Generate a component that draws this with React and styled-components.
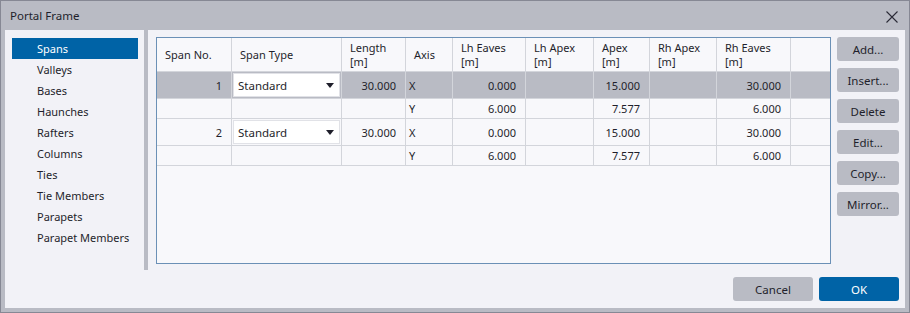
import React from 'react';
import styled, { createGlobalStyle } from 'styled-components';

const GlobalStyle = createGlobalStyle`
  html, body {
    margin: 0;
    padding: 0;
    background: #ffffff;
  }
  body {
    font-family: "Noto Sans", "Liberation Sans", sans-serif;
    font-size: 11px;
    color: #1f1f2b;
  }
`;

const navItems = [
  'Spans',
  'Valleys',
  'Bases',
  'Haunches',
  'Rafters',
  'Columns',
  'Ties',
  'Tie Members',
  'Parapets',
  'Parapet Members',
];

const columns = [
  { title: 'Span No.', width: 75 },
  { title: 'Span Type', width: 110 },
  { title: 'Length', unit: true, width: 64 },
  { title: 'Axis', width: 47 },
  { title: 'Lh Eaves', unit: true, width: 73 },
  { title: 'Lh Apex', unit: true, width: 68 },
  { title: 'Apex', unit: true, width: 56 },
  { title: 'Rh Apex', unit: true, width: 67 },
  { title: 'Rh Eaves', unit: true, width: 74 },
  { title: '', width: 40 },
];

/* span rows come in pairs: X line carries the type dropdown, Y line is plain */
const rows = [
  { no: '1', type: 'Standard', length: '30.000', axis: 'X', lhEaves: '0.000', apex: '15.000', rhEaves: '30.000', selected: true },
  { axis: 'Y', lhEaves: '6.000', apex: '7.577', rhEaves: '6.000' },
  { no: '2', type: 'Standard', length: '30.000', axis: 'X', lhEaves: '0.000', apex: '15.000', rhEaves: '30.000' },
  { axis: 'Y', lhEaves: '6.000', apex: '7.577', rhEaves: '6.000' },
];

const sideButtons = ['Add...', 'Insert...', 'Delete', 'Edit...', 'Copy...', 'Mirror...'];

function App() {
  return (
    <>
      <GlobalStyle />
      <Window>
        <TitleBar>
          <span>Portal Frame</span>
          <CloseBtn aria-label="Close">
            <svg width="12" height="12" viewBox="0 0 12 12">
              <path d="M0.5 0.5 L11.5 11.5 M11.5 0.5 L0.5 11.5" stroke="#2a2a36" strokeWidth="1.1" fill="none" />
            </svg>
          </CloseBtn>
        </TitleBar>
        <Body>
          <Main>
            <NavList>
              {navItems.map((item, i) => (
                <NavItem key={item} $active={i === 0}>{item}</NavItem>
              ))}
            </NavList>
            <Splitter />
            <Content>
              <TableBox>
                <Grid>
                  <colgroup>
                    {columns.map((c, i) => (
                      <col key={i} style={{ width: c.width }} />
                    ))}
                  </colgroup>
                  <thead>
                    <tr>
                      {columns.map((c, i) => (
                        <HeadCell key={i}>
                          {c.unit ? (
                            <>
                              <HeadLine>{c.title}</HeadLine>
                              <HeadLine>[m]</HeadLine>
                            </>
                          ) : (
                            c.title
                          )}
                        </HeadCell>
                      ))}
                    </tr>
                  </thead>
                  <tbody>
                    {rows.map((r, i) => (
                      <Row key={i} $selected={r.selected} $tall={!!r.type}>
                        <NumCell>{r.no}</NumCell>
                        <TypeCell>
                          {r.type && (
                            <Select>
                              <span>{r.type}</span>
                              <Caret />
                            </Select>
                          )}
                        </TypeCell>
                        <NumCell>{r.length}</NumCell>
                        <AxisCell>{r.axis}</AxisCell>
                        <NumCell>{r.lhEaves}</NumCell>
                        <NumCell />
                        <NumCell>{r.apex}</NumCell>
                        <NumCell />
                        <NumCell>{r.rhEaves}</NumCell>
                        <NumCell />
                      </Row>
                    ))}
                  </tbody>
                </Grid>
              </TableBox>
              <ButtonColumn>
                {sideButtons.map((b) => (
                  <Button key={b}>{b}</Button>
                ))}
              </ButtonColumn>
            </Content>
          </Main>
          <Footer>
            <Button $wide>Cancel</Button>
            <Button $wide $primary>OK</Button>
          </Footer>
        </Body>
      </Window>
    </>
  );
}

const Window = styled.div`
  width: 910px;
  height: 313px;
  box-sizing: border-box;
  border: 1px solid #868894;
  background: #b9bbc4;
  display: flex;
  flex-direction: column;
  padding: 0 4px 4px 4px;
`;

const TitleBar = styled.div`
  height: 29px;
  display: flex;
  align-items: center;
  justify-content: space-between;
  padding-left: 5px;
  padding-right: 7px;
  font-size: 11.5px;
  color: #1f1f2b;
`;

const CloseBtn = styled.div`
  display: flex;
  align-items: center;
  padding-top: 2px;
`;

const Body = styled.div`
  flex: 1;
  background: #f2f2f7;
  display: flex;
  flex-direction: column;
`;

const Main = styled.div`
  height: 240px;
  display: flex;
`;

const NavList = styled.div`
  width: 133px;
  padding: 8px 0 0 7px;
  display: flex;
  flex-direction: column;
`;

const NavItem = styled.div`
  width: 126px;
  height: 21px;
  line-height: 21px;
  padding-left: 25px;
  box-sizing: border-box;
  white-space: nowrap;
  background: ${({ $active }) => ($active ? '#0063a6' : 'transparent')};
  color: ${({ $active }) => ($active ? '#ffffff' : '#1f1f2b')};
`;

const Splitter = styled.div`
  width: 4px;
  background: #b9bbc4;
`;

const Content = styled.div`
  flex: 1;
  display: flex;
  padding: 7px 6px 0 8px;
  gap: 6px;
`;

const TableBox = styled.div`
  width: 675px;
  height: 227px;
  box-sizing: border-box;
  border: 1px solid #6b90b6;
  background: #f8f8fb;
  overflow: hidden;
`;

const Grid = styled.table`
  border-collapse: collapse;
  table-layout: fixed;
  width: 674px;
  margin: -1px 0 0 -1px;
`;

const HeadCell = styled.th`
  height: 33px;
  padding: 0 4px 0 8px;
  text-align: left;
  font-weight: normal;
  line-height: 14px;
  vertical-align: middle;
  border: 1px solid #d3d5db;
  white-space: nowrap;
  overflow: hidden;
`;

const HeadLine = styled.div`
  height: 14px;
  line-height: 14px;
`;

const Row = styled.tr`
  height: ${({ $tall }) => ($tall ? '27px' : '20px')};
  background: ${({ $selected }) => ($selected ? '#b9bbc4' : 'transparent')};
`;

const Cell = styled.td`
  border: 1px solid #d3d5db;
  padding: 0;
  line-height: 15px;
  white-space: nowrap;
  vertical-align: middle;
`;

const NumCell = styled(Cell)`
  text-align: right;
  padding-right: 9px;
`;

const AxisCell = styled(Cell)`
  padding-left: 3px;
`;

const TypeCell = styled(Cell)`
  padding: 1px;
`;

const Select = styled.div`
  height: 24px;
  box-sizing: border-box;
  background: #ffffff;
  border: 1px solid #e1e2e7;
  display: flex;
  align-items: center;
  justify-content: space-between;
  padding: 0 5px 0 4px;
  font-size: 11.5px;
`;

const Caret = styled.span`
  width: 0;
  height: 0;
  border-left: 4px solid transparent;
  border-right: 4px solid transparent;
  border-top: 5px solid #1f1f2b;
`;

const ButtonColumn = styled.div`
  display: flex;
  flex-direction: column;
  gap: 7px;
`;

const Button = styled.div`
  width: ${({ $wide }) => ($wide ? '80px' : '62px')};
  height: 24px;
  border-radius: 3px;
  display: flex;
  align-items: center;
  justify-content: center;
  font-size: 11.5px;
  background: ${({ $primary }) => ($primary ? '#0063a6' : '#b9bbc4')};
  color: ${({ $primary }) => ($primary ? '#ffffff' : '#1f1f2b')};
`;

const Footer = styled.div`
  flex: 1;
  display: flex;
  justify-content: flex-end;
  align-items: flex-start;
  gap: 6px;
  padding: 7px 6px 0 0;
`;

export default App;
